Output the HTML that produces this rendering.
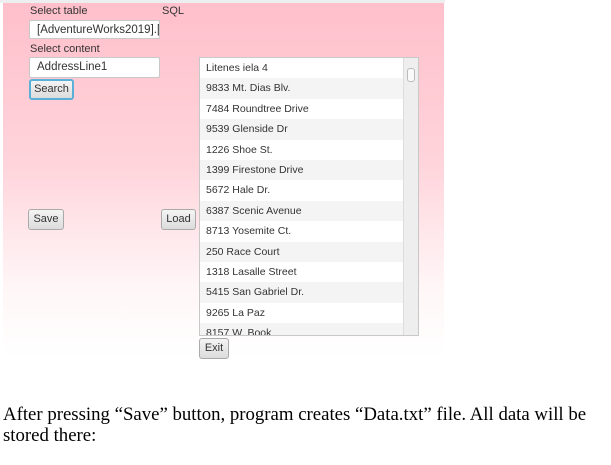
<!DOCTYPE html>
<html><head><meta charset="utf-8"><style>
*{box-sizing:border-box;margin:0;padding:0}
body{width:611px;height:465px;background:#fff;position:relative;overflow:hidden;font-family:"Liberation Sans",sans-serif}
#top{position:absolute;left:0;top:0;width:445px;height:3px;background:#eceef0}
#win{position:absolute;left:3px;top:3px;width:441px;height:355px;background:linear-gradient(#ffc0cb 0%,#ffd4db 45%,#fff6f7 80%,#fff 100%)}
.a{position:absolute;font-size:11px;color:#333}
.tf{position:absolute;background:#fff;border:1px solid #c8c8c8;border-radius:2px;font-size:11.5px;color:#333;padding:3px 0 0 7px;white-space:nowrap;overflow:hidden}
.btn{position:absolute;background:linear-gradient(#f4f4f4,#dcdcdc);border:1px solid #aaa;border-radius:3px;font-size:11px;color:#333;text-align:center;line-height:18px}
#list{position:absolute;left:199px;top:57px;width:220px;height:279px;border:1px solid #c8c8c8;background:#fff;overflow:hidden}
.r{height:20.4px;line-height:20.4px;font-size:10.5px;color:#333;padding-left:6px}
.r:nth-child(even){background:#f4f4f4}
#sb{position:absolute;right:0;top:0;width:15px;height:100%;background:#eee;border-left:1px solid #ddd}
#th{position:absolute;left:3px;top:10px;width:8px;height:14px;border:1px solid #bbb;border-radius:3px;background:#fafafa}
p{position:absolute;left:3px;top:404px;width:600px;font-family:"Liberation Serif",serif;font-size:18.8px;line-height:21px;color:#000;white-space:nowrap}
</style></head><body>
<div id="top"></div>
<div id="win"></div>
<div class="a" style="left:30px;top:5px">Select table</div>
<div class="a" style="left:162px;top:5px">SQL</div>
<div class="tf" style="left:29px;top:20px;width:131px;height:19px">[AdventureWorks2019].[P</div>
<div class="a" style="left:30px;top:43px">Select content</div>
<div class="tf" style="left:29px;top:57px;width:131px;height:21px">AddressLine1</div>
<div class="btn" style="left:29px;top:79px;width:45px;height:21px;border:2px solid #5bb0d8;line-height:17px">Search</div>
<div class="btn" style="left:28px;top:209px;width:36px;height:21px">Save</div>
<div class="btn" style="left:161px;top:209px;width:35px;height:21px">Load</div>
<div class="btn" style="left:199px;top:338px;width:30px;height:21px">Exit</div>
<div id="list">
<div class="r">Litenes iela 4</div><div class="r">9833 Mt. Dias Blv.</div><div class="r">7484 Roundtree Drive</div><div class="r">9539 Glenside Dr</div><div class="r">1226 Shoe St.</div><div class="r">1399 Firestone Drive</div><div class="r">5672 Hale Dr.</div><div class="r">6387 Scenic Avenue</div><div class="r">8713 Yosemite Ct.</div><div class="r">250 Race Court</div><div class="r">1318 Lasalle Street</div><div class="r">5415 San Gabriel Dr.</div><div class="r">9265 La Paz</div><div class="r">8157 W. Book</div>
<div id="sb"><div id="th"></div></div>
</div>
<p>After pressing “Save” button, program creates “Data.txt” file. All data will be<br>stored there:</p>
</body></html>
